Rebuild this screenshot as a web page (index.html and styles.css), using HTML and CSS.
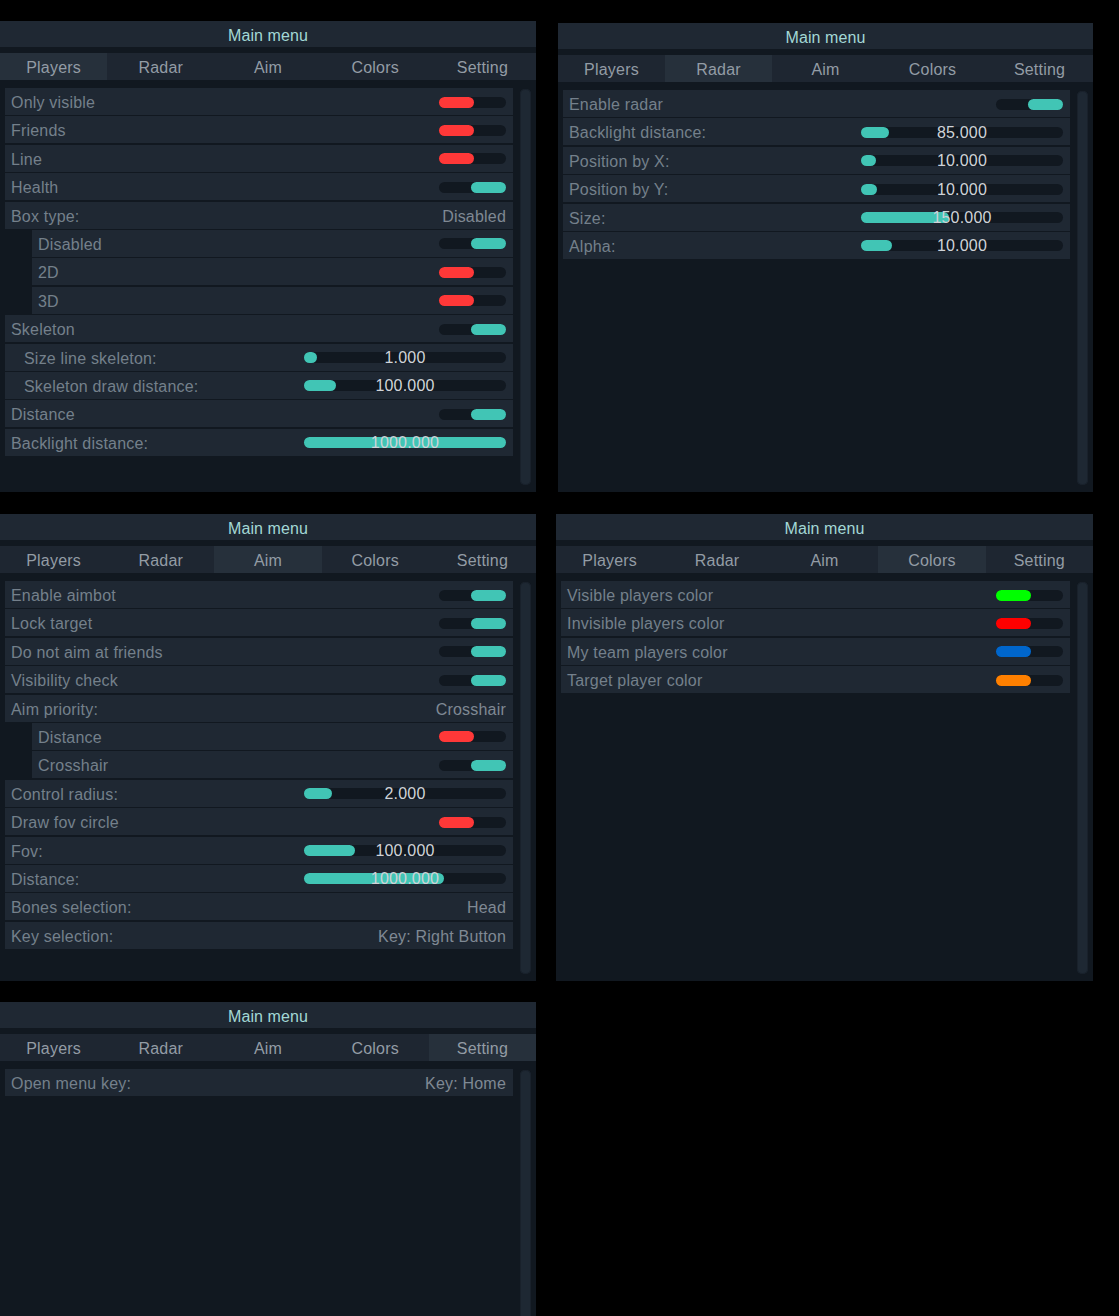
FILE: index.html
```html
<!DOCTYPE html>
<html>
<head>
<meta charset="utf-8">
<link rel="stylesheet" href="styles.css">
</head>
<body>
<div class="desk">

  <section class="win w1">
    <div class="title">Main menu</div>
    <div class="tabs"><div class="tab active">Players</div><div class="tab">Radar</div><div class="tab">Aim</div><div class="tab">Colors</div><div class="tab">Setting</div></div>
    <div class="body">
      <div class="list">
        <div class="row"><span class="lbl">Only visible</span><span class="tog off"><i class="knob"></i></span></div>
        <div class="row"><span class="lbl">Friends</span><span class="tog off"><i class="knob"></i></span></div>
        <div class="row"><span class="lbl">Line</span><span class="tog off"><i class="knob"></i></span></div>
        <div class="row"><span class="lbl">Health</span><span class="tog on"><i class="knob"></i></span></div>
        <div class="row"><span class="lbl">Box type:</span><span class="val">Disabled</span></div>
        <div class="row sub"><span class="lbl">Disabled</span><span class="tog on"><i class="knob"></i></span></div>
        <div class="row sub"><span class="lbl">2D</span><span class="tog off"><i class="knob"></i></span></div>
        <div class="row sub"><span class="lbl">3D</span><span class="tog off"><i class="knob"></i></span></div>
        <div class="row"><span class="lbl">Skeleton</span><span class="tog on"><i class="knob"></i></span></div>
        <div class="row ind"><span class="lbl">Size line skeleton:</span><span class="sl"><i class="fill" style="width:13px"></i><b class="num">1.000</b></span></div>
        <div class="row ind"><span class="lbl">Skeleton draw distance:</span><span class="sl"><i class="fill" style="width:32px"></i><b class="num">100.000</b></span></div>
        <div class="row"><span class="lbl">Distance</span><span class="tog on"><i class="knob"></i></span></div>
        <div class="row"><span class="lbl">Backlight distance:</span><span class="sl"><i class="fill" style="width:202px"></i><b class="num">1000.000</b></span></div>
      </div>
      <div class="scroll"></div>
    </div>
  </section>

  <section class="win w2">
    <div class="title">Main menu</div>
    <div class="tabs"><div class="tab">Players</div><div class="tab active">Radar</div><div class="tab">Aim</div><div class="tab">Colors</div><div class="tab">Setting</div></div>
    <div class="body">
      <div class="list">
        <div class="row"><span class="lbl">Enable radar</span><span class="tog on"><i class="knob"></i></span></div>
        <div class="row"><span class="lbl">Backlight distance:</span><span class="sl"><i class="fill" style="width:28px"></i><b class="num">85.000</b></span></div>
        <div class="row"><span class="lbl">Position by X:</span><span class="sl"><i class="fill" style="width:15px"></i><b class="num">10.000</b></span></div>
        <div class="row"><span class="lbl">Position by Y:</span><span class="sl"><i class="fill" style="width:16px"></i><b class="num">10.000</b></span></div>
        <div class="row"><span class="lbl">Size:</span><span class="sl"><i class="fill" style="width:88px"></i><b class="num">150.000</b></span></div>
        <div class="row"><span class="lbl">Alpha:</span><span class="sl"><i class="fill" style="width:31px"></i><b class="num">10.000</b></span></div>
      </div>
      <div class="scroll"></div>
    </div>
  </section>

  <section class="win w3">
    <div class="title">Main menu</div>
    <div class="tabs"><div class="tab">Players</div><div class="tab">Radar</div><div class="tab active">Aim</div><div class="tab">Colors</div><div class="tab">Setting</div></div>
    <div class="body">
      <div class="list">
        <div class="row"><span class="lbl">Enable aimbot</span><span class="tog on"><i class="knob"></i></span></div>
        <div class="row"><span class="lbl">Lock target</span><span class="tog on"><i class="knob"></i></span></div>
        <div class="row"><span class="lbl">Do not aim at friends</span><span class="tog on"><i class="knob"></i></span></div>
        <div class="row"><span class="lbl">Visibility check</span><span class="tog on"><i class="knob"></i></span></div>
        <div class="row"><span class="lbl">Aim priority:</span><span class="val">Crosshair</span></div>
        <div class="row sub"><span class="lbl">Distance</span><span class="tog off"><i class="knob"></i></span></div>
        <div class="row sub"><span class="lbl">Crosshair</span><span class="tog on"><i class="knob"></i></span></div>
        <div class="row"><span class="lbl">Control radius:</span><span class="sl"><i class="fill" style="width:28px"></i><b class="num">2.000</b></span></div>
        <div class="row"><span class="lbl">Draw fov circle</span><span class="tog off"><i class="knob"></i></span></div>
        <div class="row"><span class="lbl">Fov:</span><span class="sl"><i class="fill" style="width:51px"></i><b class="num">100.000</b></span></div>
        <div class="row"><span class="lbl">Distance:</span><span class="sl"><i class="fill" style="width:140px"></i><b class="num">1000.000</b></span></div>
        <div class="row"><span class="lbl">Bones selection:</span><span class="val">Head</span></div>
        <div class="row"><span class="lbl">Key selection:</span><span class="val">Key: Right Button</span></div>
      </div>
      <div class="scroll"></div>
    </div>
  </section>

  <section class="win w4">
    <div class="title">Main menu</div>
    <div class="tabs"><div class="tab">Players</div><div class="tab">Radar</div><div class="tab">Aim</div><div class="tab active">Colors</div><div class="tab">Setting</div></div>
    <div class="body">
      <div class="list">
        <div class="row"><span class="lbl">Visible players color</span><span class="tog off c-green"><i class="knob"></i></span></div>
        <div class="row"><span class="lbl">Invisible players color</span><span class="tog off c-red"><i class="knob"></i></span></div>
        <div class="row"><span class="lbl">My team players color</span><span class="tog off c-blue"><i class="knob"></i></span></div>
        <div class="row"><span class="lbl">Target player color</span><span class="tog off c-orange"><i class="knob"></i></span></div>
      </div>
      <div class="scroll"></div>
    </div>
  </section>

  <section class="win w5">
    <div class="title">Main menu</div>
    <div class="tabs"><div class="tab">Players</div><div class="tab">Radar</div><div class="tab">Aim</div><div class="tab">Colors</div><div class="tab active">Setting</div></div>
    <div class="body">
      <div class="list">
        <div class="row"><span class="lbl">Open menu key:</span><span class="val">Key: Home</span></div>
      </div>
      <div class="scroll"></div>
    </div>
  </section>

</div>
</body>
</html>
```

FILE: styles.css
```css
html, body {
  margin: 0;
  padding: 0;
  background: #000;
  overflow: hidden;
}
body {
  width: 1119px;
  height: 1316px;
  font-family: "Liberation Sans", Arial, sans-serif;
  font-size: 16px;
}
.desk {
  display: grid;
  grid-template-columns: 536px 537px;
  column-gap: 20px;
  row-gap: 22px;
  padding-top: 21px;
  align-items: start;
}
.win {
  display: flex;
  flex-direction: column;
  background: #111820;
  box-sizing: border-box;
}
.w1 { width: 536px; height: 471px; }
.w2 { width: 535px; height: 469px; margin-top: 2px; margin-left: 2px; }
.w3 { width: 536px; height: 467px; }
.w4 { width: 537px; height: 467px; }
.w5 { width: 536px; height: 330px; margin-top: -1px; }

.title {
  height: 26px;
  line-height: 29px;
  background: #1f2833;
  color: #a3d8d6;
  text-align: center;
  letter-spacing: 0.1px;
  overflow: hidden;
}
.tabs {
  display: flex;
  margin-top: 6px;
  height: 27px;
  background: #1e2631;
}
.tab {
  flex: 1;
  text-align: center;
  line-height: 30px;
  height: 27px;
  overflow: hidden;
  color: #939ca5;
  letter-spacing: 0.2px;
}
.tab.active {
  background: #26303b;
}
.body {
  flex: 1;
  display: flex;
  gap: 7px;
  padding: 8px 5px 7px 5px;
  min-height: 0;
}
.list {
  flex: 1;
  display: flex;
  flex-direction: column;
  gap: 1.4px;
}
.scroll {
  width: 11px;
  flex: none;
  margin-top: 1px;
  background: #1e2833;
  border-radius: 5px;
  box-shadow: inset 0 0 0 1px #19212b;
}
.row {
  flex: none;
  height: 27px;
  display: flex;
  align-items: center;
  justify-content: space-between;
  background: #1f2833;
  padding: 0 7px 0 6px;
  box-sizing: border-box;
}
.row.sub {
  margin-left: 27px;
}
.row.ind .lbl {
  padding-left: 13px;
}
.lbl {
  color: #74808b;
  letter-spacing: 0.2px;
  white-space: nowrap;
  line-height: 24px;
  padding-top: 3px;
}
.val {
  color: #7f8994;
  letter-spacing: 0.2px;
  white-space: nowrap;
  line-height: 24px;
  padding-top: 3px;
}
.tog {
  display: flex;
  width: 67px;
  height: 11px;
  margin-top: 1px;
  border-radius: 6px;
  background: #111820;
}
.tog.on { justify-content: flex-end; }
.knob {
  display: block;
  width: 35px;
  height: 11px;
  border-radius: 6px;
}
.tog.on .knob { background: #41c5b5; }
.tog.off .knob { background: #ff3838; }
.tog.c-green .knob { background: #00ff00; }
.tog.c-red .knob { background: #ff0000; }
.tog.c-blue .knob { background: #0066cc; }
.tog.c-orange .knob { background: #ff8000; }

.sl {
  display: grid;
  width: 202px;
  height: 11px;
  margin-top: 1px;
  border-radius: 6px;
  background: #111820;
}
.sl > * {
  grid-area: 1 / 1;
}
.fill {
  display: block;
  justify-self: start;
  height: 11px;
  border-radius: 6px;
  background: #41c5b5;
}
.num {
  justify-self: center;
  font-weight: normal;
  line-height: 12px;
  height: 11px;
  color: #cfd3d8;
  letter-spacing: 0.2px;
  white-space: nowrap;
}
```
